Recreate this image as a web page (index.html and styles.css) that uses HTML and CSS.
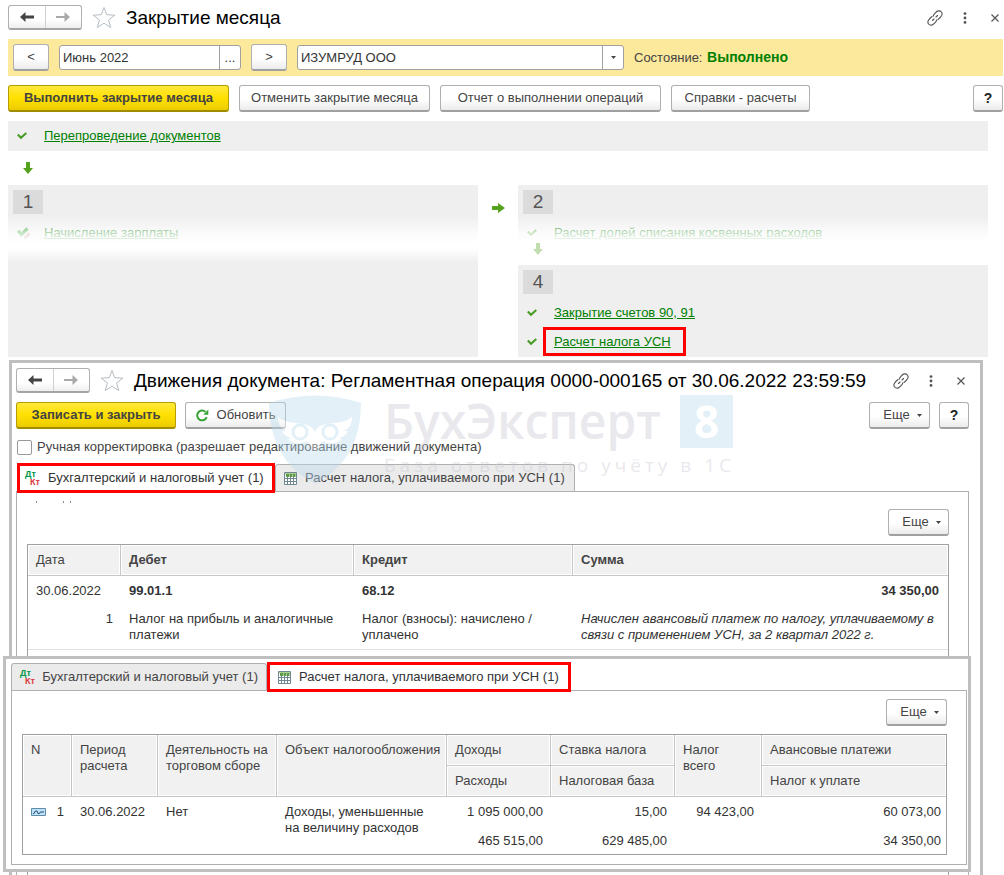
FILE: index.html
```html
<!DOCTYPE html>
<html lang="ru">
<head>
<meta charset="utf-8">
<title>Закрытие месяца</title>
<link rel="stylesheet" href="styles.css">
</head>
<body>
<svg class="defs" width="0" height="0" aria-hidden="true">
  <symbol id="back" viewBox="0 0 14 10"><path d="M0 5 5.500 0v3.600H14v2.800H5.500V10z"/></symbol>
  <symbol id="forward" viewBox="0 0 14 10"><path d="M14 5 8.500 0v4H0v2h8.500v4z"/></symbol>
  <symbol id="star" viewBox="0 0 24 23"><path d="M12 1.500 14.700 8.700 22.800 9.200 16.500 14 18.700 21.500 12 17.200 5.300 21.500 7.500 14 1.200 9.200 9.300 8.700z" fill="#fff" stroke="#b5bcc4"/></symbol>
  <symbol id="link" viewBox="0 0 16 16"><g fill="none" stroke="#555" stroke-width="1.100" stroke-linecap="round"><path d="M6.200 6.200C6.500 4.500 9.500 1.300 11 .9c3-.5 4.800 2 3.800 4.300-.6 1.200-2.300 3.200-3.800 4.300"/><path d="M9.800 9.800c-.3 1.700-3.300 4.900-4.800 5.300-3 .5-4.800-2-3.800-4.300.6-1.200 2.300-3.200 3.800-4.300"/><path d="M5.500 10.500 7 9M9 7l1.500-1.500"/></g></symbol>
  <symbol id="dots" viewBox="0 0 4 12"><circle cx="2" cy="1.600" r="1.400"/><circle cx="2" cy="6" r="1.400"/><circle cx="2" cy="10.400" r="1.400"/></symbol>
  <symbol id="close" viewBox="0 0 8 8"><path d="M.5.5l7 7M7.500.5l-7 7" stroke="#555" stroke-width="1.200"/></symbol>
  <symbol id="check" viewBox="0 0 10 8"><path d="M.8 2.500 4 5.700 9.300 1" fill="none" stroke="#4a9c28" stroke-width="2.200"/></symbol>
  <symbol id="edited" viewBox="0 0 14 12"><path d="M1 4 4.500 7.500 10.500 1.500" fill="none" stroke="#2fa52f" stroke-width="3.200"/><path d="M7.500 11.500 12.500 6.500" stroke="#b08a80" stroke-width="2.500"/></symbol>
  <symbol id="down" viewBox="0 0 10 12"><path d="M3 0h4v6h3l-5 6-5-6h3z" fill="#54a11e"/></symbol>
  <symbol id="right" viewBox="0 0 13 10"><path d="M0 3h6V0l7 5-7 5V7H0z" fill="#54a11e"/></symbol>
  <symbol id="caret" viewBox="0 0 5 3"><path d="M0 0h5L2.500 3z" fill="#444"/></symbol>
  <symbol id="refresh" viewBox="0 0 13 13"><path d="M10.700 8.200A4.900 4.900 0 1 1 9.500 2.900" fill="none" stroke="#36a336" stroke-width="2"/><path d="M12.300.5v5.200H7.300z" fill="#36a336"/></symbol>
  <symbol id="sheet" viewBox="0 0 13 13"><path d="M.5.500h12v12H.5z" fill="#fff" stroke="#6f8793"/><path d="M3.500 2v10M6.500 2v10M9.500 2v10M1 6.500h11M1 9.500h11" stroke="#6f8793"/><path d="M1 1h11v1.500H1z" fill="#a9d08f"/><path d="M2 2h3v3H2zM5.500 2h2.500v3H5.500zM8.500 2h3v3h-3z" fill="#5c9a45"/></symbol>
  <symbol id="record" viewBox="0 0 15 8"><path d="M.5.500h14v7H.5z" fill="#bfe0f5" stroke="#5e8cab"/><path d="M2 5.500h1l1.500-2.500h1.500l1 2.500h1.500l1-1.500H13" fill="none" stroke="#1c4f7d"/></symbol>
</svg>

<div class="desktop">
<main class="month">
  <header class="titlebar">
    <div class="nav">
      <button aria-label="Назад"><svg class="arrow"><use href="#back"/></svg></button>
      <button class="off" aria-label="Вперед"><svg class="arrow"><use href="#forward"/></svg></button>
    </div>
    <svg class="star"><use href="#star"/></svg>
    <h1>Закрытие месяца</h1>
    <div class="tools">
      <svg class="link"><use href="#link"/></svg>
      <svg class="dots"><use href="#dots"/></svg>
      <svg class="close"><use href="#close"/></svg>
    </div>
  </header>

  <div class="filter">
    <button class="btn step">&lt;</button>
    <div class="field period"><input type="text" value="Июнь 2022" aria-label="Период"><button aria-label="Выбрать период">...</button></div>
    <button class="btn step">&gt;</button>
    <div class="field org"><select aria-label="Организация"><option>ИЗУМРУД ООО</option></select><span class="drop"><svg class="caret"><use href="#caret"/></svg></span></div>
    <p class="state">Состояние: <strong>Выполнено</strong></p>
  </div>

  <div class="commands">
    <button class="btn primary run">Выполнить закрытие месяца</button>
    <button class="btn cancel">Отменить закрытие месяца</button>
    <button class="btn report">Отчет о выполнении операций</button>
    <button class="btn refs">Справки - расчеты</button>
    <button class="btn help">?</button>
  </div>

  <div class="stages">
    <div class="step-row wide"><svg class="check"><use href="#check"/></svg><a href="#">Перепроведение документов</a></div>
    <svg class="down"><use href="#down"/></svg>
    <div class="columns">
      <section class="stage fade">
        <h2>1</h2>
        <div class="step-row"><svg class="edited"><use href="#edited"/></svg><a href="#">Начисление зарплаты</a></div>
      </section>
      <svg class="right"><use href="#right"/></svg>
      <div class="stack">
        <section class="stage short fade">
          <h2>2</h2>
          <div class="step-row"><svg class="check"><use href="#check"/></svg><a href="#">Расчет долей списания косвенных расходов</a></div>
        </section>
        <svg class="down pale"><use href="#down"/></svg>
        <section class="stage four">
          <h2>4</h2>
          <div class="step-row"><svg class="check"><use href="#check"/></svg><a href="#">Закрытие счетов 90, 91</a></div>
          <div class="step-row"><svg class="check"><use href="#check"/></svg><a href="#" class="framed">Расчет налога УСН</a></div>
        </section>
      </div>
    </div>
  </div>
</main>

<section class="window doc">
  <header class="titlebar">
    <div class="nav">
      <button aria-label="Назад"><svg class="arrow"><use href="#back"/></svg></button>
      <button class="off" aria-label="Вперед"><svg class="arrow"><use href="#forward"/></svg></button>
    </div>
    <svg class="star"><use href="#star"/></svg>
    <h1>Движения документа: Регламентная операция 0000-000165 от 30.06.2022 23:59:59</h1>
    <div class="tools">
      <svg class="link"><use href="#link"/></svg>
      <svg class="dots"><use href="#dots"/></svg>
      <svg class="close"><use href="#close"/></svg>
    </div>
  </header>
  <div class="commands">
    <button class="btn primary save">Записать и закрыть</button>
    <button class="btn update"><svg class="refresh"><use href="#refresh"/></svg>Обновить</button>
    <button class="btn more push">Еще <svg class="caret"><use href="#caret"/></svg></button>
    <button class="btn help">?</button>
  </div>
  <label class="manual"><input type="checkbox">Ручная корректировка (разрешает редактирование движений документа)</label>
  <div class="tabs" role="tablist">
    <button class="tab active" role="tab"><span class="dtkt"><b>Дт</b><i>Кт</i></span>Бухгалтерский и налоговый учет (1)</button>
    <button class="tab" role="tab"><svg class="sheet"><use href="#sheet"/></svg>Расчет налога, уплачиваемого при УСН (1)</button>
  </div>
  <div class="pane">
    <svg class="ticks" viewBox="0 0 36 3"><path d="M.5 0v2M27.500 0v2M34.500 0v2" stroke="#8a8a8a"/></svg>
    <button class="btn more">Еще <svg class="caret"><use href="#caret"/></svg></button>
    <div class="sheetbox">
    <table class="grid entries">
      <colgroup><col class="e1"><col class="e2"><col class="e3"><col></colgroup>
      <thead><tr><th class="plain">Дата</th><th>Дебет</th><th>Кредит</th><th>Сумма</th></tr></thead>
      <tbody>
        <tr class="head"><td>30.06.2022</td><td><b>99.01.1</b></td><td><b>68.12</b></td><td class="num"><b>34 350,00</b></td></tr>
        <tr class="body"><td class="num">1</td><td>Налог на прибыль и аналогичные платежи</td><td>Налог (взносы): начислено / уплачено</td><td><em>Начислен авансовый платеж по налогу, уплачиваемому в связи с применением УСН, за 2 квартал 2022 г.</em></td></tr>
      </tbody>
    </table>
    </div>
  </div>
  <div class="brand" aria-hidden="true">
    <svg class="owl" viewBox="0 0 94 90"><path fill="#badcee" d="M1 8Q47-7 93 8Q93 36 82 56Q70 77 47 89Q24 77 12 56Q1 36 1 8z"/><path fill="#fff" d="M10 22C22 32 42 24 47 37C52 24 72 32 84 22C84 30 81 34 75 36L80 36C78 40 75 42 71 43L74 44C69 49 62 50 55 46L47 57 39 46C32 50 25 49 20 44L23 43C19 42 16 40 14 36L19 36C13 34 10 30 10 22z"/><g fill="#fff" stroke="#badcee" stroke-width="3"><circle cx="32" cy="37" r="7"/><circle cx="62" cy="37" r="7"/></g></svg>
    <div class="words"><p class="name">БухЭксперт</p><p class="motto">База ответов по учёту в 1С</p></div>
    <p class="eight">8</p>
  </div>
</section>

<section class="window tax">
  <div class="tabs" role="tablist">
    <button class="tab" role="tab"><span class="dtkt"><b>Дт</b><i>Кт</i></span>Бухгалтерский и налоговый учет (1)</button>
    <button class="tab active" role="tab"><svg class="sheet"><use href="#sheet"/></svg>Расчет налога, уплачиваемого при УСН (1)</button>
  </div>
  <div class="pane">
    <button class="btn more">Еще <svg class="caret"><use href="#caret"/></svg></button>
    <table class="grid calc">
      <colgroup><col class="c1"><col class="c2"><col class="c3"><col class="c4"><col class="c5"><col class="c6"><col class="c7"><col></colgroup>
      <thead>
        <tr><th rowspan="2">N</th><th rowspan="2">Период расчета</th><th rowspan="2">Деятельность на торговом сборе</th><th rowspan="2">Объект налогообложения</th><th>Доходы</th><th>Ставка налога</th><th rowspan="2">Налог<br>всего</th><th>Авансовые платежи</th></tr>
        <tr><th>Расходы</th><th>Налоговая база</th><th>Налог к уплате</th></tr>
      </thead>
      <tbody>
        <tr><td rowspan="2"><span class="rec"><svg class="record"><use href="#record"/></svg>1</span></td><td rowspan="2">30.06.2022</td><td rowspan="2">Нет</td><td rowspan="2">Доходы, уменьшенные на величину расходов</td><td class="num">1 095 000,00</td><td class="num">15,00</td><td rowspan="2" class="num">94 423,00</td><td class="num">60 073,00</td></tr>
        <tr><td class="num">465 515,00</td><td class="num">629 485,00</td><td class="num">34 350,00</td></tr>
      </tbody>
    </table>
  </div>
</section>
</div>
</body>
</html>
```
FILE: styles.css
```css
* { box-sizing: border-box; }
body {
  margin: 0;
  background: #fff;
  color: #333;
  font: 13px/16px "Liberation Sans", Arial, sans-serif;
}
button, input, select { font: inherit; color: inherit; margin: 0; }
h1, h2, p { margin: 0; font-weight: normal; }
svg { display: block; flex: none; }
.defs { position: absolute; }

.desktop {
  position: relative;
  display: flex;
  flex-direction: column;
  height: 100vh;
  min-height: 875px;
  overflow: hidden;
}
.month { padding: 5px 1px 3px 8px; }

/* title bars */
.titlebar { display: flex; align-items: center; height: 25px; }
.nav {
  display: flex;
  width: 74px;
  height: 25px;
  border: 1px solid #b0b0b0;
  border-bottom: 2px solid #a4a4a4;
  border-radius: 3px;
  background: linear-gradient(#fff 60%, #eee);
}
.nav button {
  flex: 1;
  display: flex;
  align-items: center;
  justify-content: center;
  padding: 0;
  border: 0;
  background: none;
  fill: #444;
}
.nav .off { border-left: 1px solid #d0d0d0; fill: #aaa; }
.arrow { width: 14px; height: 10px; }
.star { width: 24px; height: 23px; margin: 0 10px; }
h1 { font-size: 19px; line-height: 24px; color: #000; white-space: nowrap; }
.tools { display: flex; align-items: center; margin-left: auto; fill: #555; }
.link { width: 16px; height: 16px; }
.dots { width: 4px; height: 12px; margin: 0 24px 0 20px; }
.close { width: 8px; height: 8px; margin-right: 4px; }

/* buttons and fields */
.btn {
  display: flex;
  align-items: center;
  justify-content: center;
  height: 27px;
  padding: 0 2px;
  border: 1px solid #b0b0b0;
  border-bottom: 2px solid #a0a0a0;
  border-radius: 3px;
  background: linear-gradient(#fff 55%, #ebebeb);
  color: #444;
  white-space: nowrap;
}
.primary {
  border-color: #b59f00;
  border-bottom-color: #a08c00;
  background: linear-gradient(#ffe93d, #ffe000 50%, #eccc00);
  font-weight: bold;
}
.filter {
  display: flex;
  align-items: center;
  gap: 10px;
  height: 37px;
  margin-top: 9px;
  padding: 0 5px;
  background: #fce99c;
}
.step { width: 36px; }
.field {
  display: flex;
  height: 25px;
  border: 1px solid #a0a0a0;
  border-radius: 3px;
  background: #fff;
}
.field input, .field select {
  flex: 1;
  min-width: 0;
  padding: 0 3px;
  border: 0;
  background: none;
  appearance: none;
}
.field button, .drop {
  display: flex;
  align-items: center;
  justify-content: center;
  width: 21px;
  padding: 0;
  border: 0;
  border-left: 1px solid #a0a0a0;
  background: none;
}
.period { width: 182px; }
.org { width: 327px; }
.caret { width: 5px; height: 3px; }
.state { color: #444; white-space: nowrap; }
.state strong { margin-left: 1px; font-size: 14px; color: #008000; }

.commands { display: flex; gap: 10px; margin-top: 9px; }
.run, .report { width: 221px; }
.cancel { width: 191px; }
.refs { width: 139px; }
.help { width: 30px; margin-left: auto; font-weight: bold; font-size: 14px; color: #222; }

/* stages */
.stages { margin: 9px 15px 0 0; }
.step-row { display: flex; align-items: center; height: 29px; padding-left: 9px; }
.wide { height: 30px; background: #efefef; }
a { color: #008000; text-decoration: underline; }
.check { width: 10px; height: 8px; margin-right: 17px; }
.edited { width: 14px; height: 12px; margin-right: 13px; }
.down { width: 10px; height: 12px; margin: 11px 0 11px 15px; }
.columns { display: flex; }
.stage { position: relative; flex: 1; padding: 5px 0 0; height: 172px; background: #efefef; }
.stage .step-row:nth-of-type(1) { margin-top: 4px; }
.stage h2 {
  width: 30px;
  height: 24px;
  margin-left: 5px;
  background: #dbdbdb;
  color: #555;
  font-size: 19px;
  line-height: 24px;
  text-align: center;
}
.stack { flex: 1; }
.right { width: 13px; height: 10px; margin: 18px 13px 0 14px; }
.stage.short { height: 62px; }
.fade::after {
  content: "";
  position: absolute;
  inset: 31px 0 auto;
  height: 47px;
  background: linear-gradient(rgba(255,255,255,0), rgba(255,255,255,.7) 35%, #fff 58%, #fff 68%, rgba(255,255,255,0));
}
.short.fade::after {
  height: 31px;
  background: linear-gradient(rgba(255,255,255,0), rgba(255,255,255,.7) 50%, #fff 85%);
}
.pale { position: relative; height: 12px; margin: -4px 0 10px 15px; opacity: .35; }
.stage.four { height: 92px; }
.framed { margin: 0 0 0 -11px; padding: 4px 12px 3px 8px; border: 3px solid red; }

/* windows */
.window { border: 3px solid #bfbfbf; background: #fff; }
.doc {
  position: relative;
  flex: 1;
  display: flex;
  flex-direction: column;
  margin: 0 21px 0 9px;
  padding: 5px 11px 0 4px;
  border-bottom: 0;
}
.save { width: 160px; }
.doc .commands { gap: 9px; }
.update { width: 101px; }
.refresh { width: 13px; height: 13px; margin-right: 8px; }
.push { margin-left: auto; }
.push + .help { margin-left: 0; }
.more { width: 61px; gap: 7px; padding-left: 8px; }
.manual { display: flex; align-items: center; gap: 5px; height: 16px; margin-top: 10px; color: #444; }
.manual input {
  width: 15px;
  height: 15px;
  margin: 0 0 0 1px;
  border: 1px solid #999;
  border-radius: 2px;
  background: #fff;
  appearance: none;
}
.tabs { display: flex; align-items: flex-end; height: 27px; }
.doc .tabs { margin-top: 9px; }
.tab {
  display: flex;
  align-items: center;
  height: 27px;
  padding: 0 8px;
  border: 1px solid #b0b0b0;
  border-bottom: 0;
  border-radius: 3px 3px 0 0;
  background: #ebebeb;
  color: #444;
  white-space: nowrap;
}
.tab.active {
  position: relative;
  height: 30px;
  margin-bottom: -2px;
  border: 3px solid red;
  border-radius: 0;
  background: #fff;
  color: #333;
}
.doc .tab.active { width: 258px; margin-left: 1px; padding: 0 5px; }
.doc .tab { width: 300px; }
.tax .tab { width: 256px; }
.tax .tab.active { width: 304px; }
.dtkt { display: flex; flex-direction: column; width: 18px; margin-right: 5px; font-size: 9px; line-height: 8px; text-align: left; }
.dtkt b { color: #009646; }
.dtkt i { padding-left: 5px; color: #d9363e; font-style: normal; font-weight: bold; }
.sheet { width: 13px; height: 13px; margin-right: 8px; }
.pane { display: flex; flex-direction: column; border: 1px solid #b0b0b0; }
.pane .more { align-self: flex-end; }
.doc .pane { flex: 1; padding: 9px 19px 0 10px; border-bottom: 0; }
.ticks { width: 36px; height: 3px; margin: 0 0 5px 9px; }
.sheetbox { flex: 1; margin-top: 8px; border: 1px solid #a0a0a0; border-bottom: 0; }

.grid { width: 100%; table-layout: fixed; border-collapse: separate; border-spacing: 0; }
.grid th {
  height: 31px;
  padding: 7px 4px 7px 8px;
  border-right: 1px solid #c6c6c6;
  border-bottom: 1px solid #c6c6c6;
  box-shadow: inset 0 0 0 1px #fff;
  background: #f1f1f1;
  color: #444;
  text-align: left;
  vertical-align: top;
}
.grid th:last-child { border-right: 0; }
.grid td { padding: 7px 9px 6px 8px; vertical-align: top; }
.grid .num { text-align: right; }
.grid .plain, .calc th { font-weight: normal; }
.entries .body td { padding: 6px 8px; border-bottom: 1px solid #e2e2e2; }
.e1 { width: 93px; }
.e2 { width: 233px; }
.e3 { width: 219px; }

.tax { position: absolute; top: 656px; left: 3px; right: 33px; padding: 4px 1px 4px 5px; }
.tax .pane { padding: 8px 19px 9px 10px; }
.calc { margin-top: 8px; border: 1px solid #a0a0a0; }
.calc td { height: 29px; padding: 7px 8px 5px; }
.calc tr:last-child td { height: 28px; }
.calc td:last-child { padding-right: 5px; }
.c1 { width: 49px; }
.c2 { width: 86px; }
.c3 { width: 119px; }
.c4 { width: 170px; }
.c5 { width: 104px; }
.c6 { width: 124px; }
.c7 { width: 87px; }
.rec { display: flex; align-items: center; justify-content: space-between; }
.record { width: 15px; height: 8px; }

/* translucent brand mark over the document window */
.brand {
  position: absolute;
  top: 32px;
  left: 256px;
  display: flex;
  align-items: flex-start;
  pointer-events: none;
  opacity: .4;
  color: #c9c8d4;
  font-family: "Open Sans", "Noto Sans", sans-serif;
}
.owl { width: 94px; height: 90px; }
.words { width: 294px; margin: 0 2px 0 22px; white-space: nowrap; }
.name { font-size: 48px; line-height: 52px; font-weight: 600; }
.motto { font-size: 19px; line-height: 24px; margin-top: 6px; letter-spacing: 4px; }
.eight {
  width: 53px;
  height: 53px;
  background: #badcee;
  color: #fff;
  font-size: 44px;
  line-height: 53px;
  font-weight: bold;
  text-align: center;
}
```
